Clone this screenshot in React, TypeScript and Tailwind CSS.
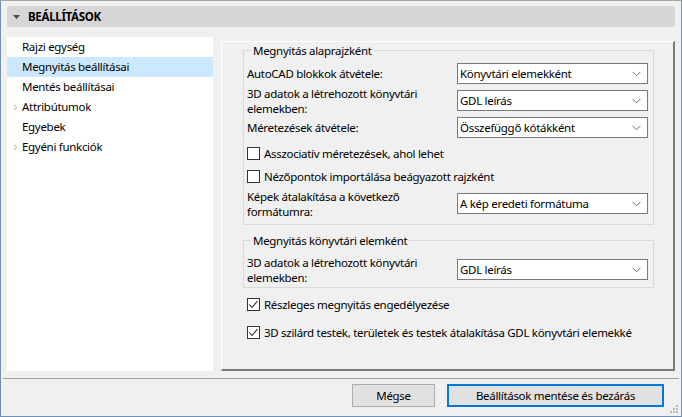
import React from "react";

const font = { fontFamily: '"Noto Sans", "Open Sans", sans-serif' };

function Chevron() {
  return (
    <svg width="9" height="6" viewBox="0 0 9 6" className="shrink-0">
      <polyline points="0.5,0.8 4.5,4.8 8.5,0.8" fill="none" stroke="#707070" strokeWidth="1" />
    </svg>
  );
}

function Dropdown({ value }: { value: string }) {
  return (
    <div className="w-[191px] h-[21px] bg-white border border-[#7a7a7a] flex items-center justify-between pl-[2px] pr-[6px] shrink-0">
      <span className="leading-[15px] text-black whitespace-nowrap">{value}</span>
      <Chevron />
    </div>
  );
}

function Checkbox({ checked, label }: { checked?: boolean; label: string }) {
  return (
    <div className="flex items-center h-[13px] gap-[4px]">
      <div className="w-[13px] h-[13px] border border-[#333333] bg-white flex items-center justify-center shrink-0">
        {checked && (
          <svg width="11" height="11" viewBox="0 0 11 11">
            <polyline points="1.5,5.5 4,8.5 9.5,2" fill="none" stroke="#222" strokeWidth="1.1" />
          </svg>
        )}
      </div>
      <span className="leading-[15px] text-black whitespace-nowrap">{label}</span>
    </div>
  );
}

function Row({ label, value }: { label: React.ReactNode; value: string }) {
  return (
    <div className="h-[21px] flex items-center justify-between pr-[5px]">
      <span className="leading-[15px] text-black">{label}</span>
      <Dropdown value={value} />
    </div>
  );
}

function Group({ title, children, className }: { title: string; children: React.ReactNode; className?: string }) {
  return (
    <div className={"relative w-[411px] border border-[#d9d9d9] pl-[3px] " + (className || "")}>
      <div className="absolute -top-[8px] left-[7px] px-[2px] bg-[#f0f0f0] leading-[15px] text-black whitespace-nowrap">
        {title}
      </div>
      {children}
    </div>
  );
}

function ListChevron() {
  return (
    <svg width="5" height="7" viewBox="0 0 5 7" className="absolute left-[6px] top-[7px]">
      <polyline points="1,0.8 3.8,3.5 1,6.2" fill="none" stroke="#a8a8a8" strokeWidth="1" />
    </svg>
  );
}

export default function App() {
  const items = [
    { t: "Rajzi egység" },
    { t: "Megnyitás beállításai", sel: true },
    { t: "Mentés beállításai" },
    { t: "Attribútumok", ch: true },
    { t: "Egyebek" },
    { t: "Egyéni funkciók", ch: true },
  ];
  return (
    <div
      style={font}
      className="w-[682px] h-[417px] bg-[#f0f0f0] border border-[#7391b5] border-t-[#a5a5a5] flex flex-col relative overflow-hidden text-[11.5px] tracking-[-0.3px]"
    >
      {/* header */}
      <div className="mt-[5px] ml-[6px] w-[668px] h-[21px] rounded-[3px] bg-[#d6d6d6] flex items-center">
        <svg width="7" height="4" viewBox="0 0 7 4" className="ml-[6px]">
          <polygon points="0,0 7,0 3.5,4" fill="#4a4a4a" />
        </svg>
        <span className="ml-[8px] font-bold text-black">BEÁLLÍTÁSOK</span>
      </div>

      {/* main */}
      <div className="mt-[10px] ml-[6px] flex h-[334px]">
        <div className="w-[206px] h-[334px] bg-white flex flex-col">
          {items.map((it) => (
            <div
              key={it.t}
              className={"relative h-[20px] flex items-center pl-[15px] text-black " + (it.sel ? "bg-[#cce8ff]" : "")}
            >
              {it.ch && <ListChevron />}
              {it.t}
            </div>
          ))}
        </div>

        <div className="ml-[8px] mt-[4px] w-[454px] h-[330px] border-t border-l border-white border-r-2 border-b-2 border-r-[#7a7a7a] border-b-[#7a7a7a] pl-[21px] flex flex-col">
          <Group title="Megnyitás alaprajzként" className="mt-[8px] pt-[12px] pb-[10px]">
            <Row label="AutoCAD blokkok átvétele:" value="Könyvtári elemekként" />
            <div className="mt-[6px]">
              <Row label={<>3D adatok a létrehozott könyvtári<br />elemekben:</>} value="GDL leírás" />
            </div>
            <div className="mt-[6px]">
              <Row label="Méretezések átvétele:" value="Összefüggő kótákként" />
            </div>
            <div className="mt-[9px]">
              <Checkbox label="Asszociatív méretezések, ahol lehet" />
            </div>
            <div className="mt-[10px]">
              <Checkbox label="Nézőpontok importálása beágyazott rajzként" />
            </div>
            <div className="mt-[10px]">
              <Row label={<>Képek átalakítása a következő<br />formátumra:</>} value="A kép eredeti formátuma" />
            </div>
          </Group>

          <Group title="Megnyitás könyvtári elemként" className="mt-[15px] pt-[18px] pb-[7px]">
            <Row label={<>3D adatok a létrehozott könyvtári<br />elemekben:</>} value="GDL leírás" />
          </Group>

          <div className="ml-[4px] mt-[10px]">
            <Checkbox checked label="Részleges megnyitás engedélyezése" />
          </div>
          <div className="ml-[4px] mt-[15px]">
            <Checkbox checked label="3D szilárd testek, területek és testek átalakítása GDL könyvtári elemekké" />
          </div>
        </div>
      </div>

      {/* separator */}
      <div className="mt-[7px] ml-[2px] w-[676px] h-[1px] bg-[#a0a0a0]" />

      {/* buttons */}
      <div className="mt-[5px] flex justify-end pr-[17px] gap-[12px]">
        <button className="w-[83px] h-[23px] bg-[#e1e1e1] border border-[#adadad] text-black">Mégse</button>
        <button className="w-[217px] h-[23px] bg-[#e1e1e1] border-2 border-[#0078d7] text-black">
          Beállítások mentése és bezárás
        </button>
      </div>

      {/* resize grip */}
      <svg width="10" height="10" viewBox="0 0 10 10" className="absolute right-[2px] bottom-[2px]">
        <rect x="7" y="1" width="2" height="2" fill="#b8b8b8" />
        <rect x="4" y="4" width="2" height="2" fill="#b8b8b8" />
        <rect x="7" y="4" width="2" height="2" fill="#b8b8b8" />
        <rect x="1" y="7" width="2" height="2" fill="#b8b8b8" />
        <rect x="4" y="7" width="2" height="2" fill="#b8b8b8" />
        <rect x="7" y="7" width="2" height="2" fill="#b8b8b8" />
      </svg>
    </div>
  );
}
